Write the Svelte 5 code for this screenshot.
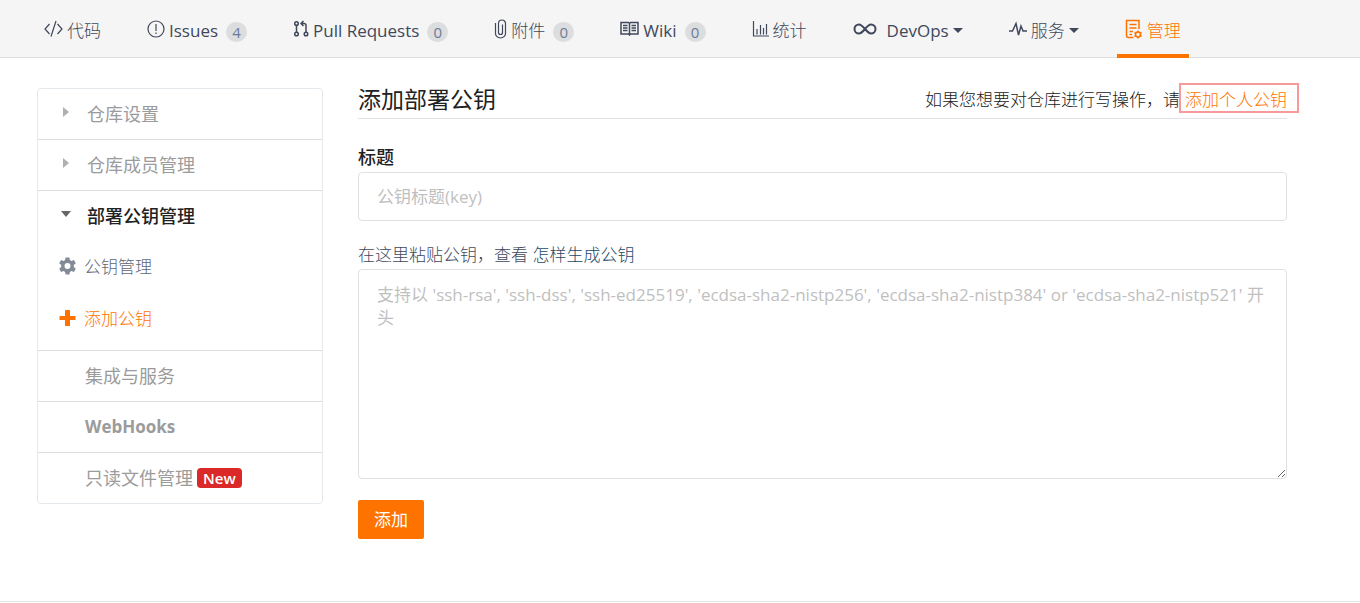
<script>
  const tabs = [
    { icon: 'code', label: '代码', light: true },
    { icon: 'issue', label: 'Issues', count: 4 },
    { icon: 'pull', label: 'Pull Requests', count: 0 },
    { icon: 'clip', label: '附件', count: 0, light: true },
    { icon: 'wiki', label: 'Wiki', count: 0 },
    { icon: 'chart', label: '统计', light: true },
    { icon: 'devops', label: 'DevOps', menu: true },
    { icon: 'pulse', label: '服务', menu: true, light: true },
    { icon: 'manage', label: '管理', active: true, light: true }
  ];
  let title = $state('');
  let key = $state('');
</script>

{#snippet tabIcon(name)}
  {#if name === 'code'}
    <svg width="19" height="18" viewBox="0 0 19 18"><path d="M5.5 4 1 9l4.500 5M13.500 4 18 9l-4.500 5M12 1 7 16.500" /></svg>
  {:else if name === 'issue'}
    <svg width="18" height="18" viewBox="0 0 18 18"><circle cx="9" cy="9" r="8" /><path d="M9 4v7M9 12.500v1.500" /></svg>
  {:else if name === 'pull'}
    <svg class="bold" width="16" height="18" viewBox="0 0 16 18"><circle cx="3.500" cy="3.500" r="1.800" /><circle cx="3.500" cy="14" r="1.800" /><circle cx="13" cy="14" r="1.800" /><path d="M3.500 5.300v6.900M13 12.200V5.500Q13 3.500 11 3.500H8.500M10.500 1 8 3.500 10.500 6" /></svg>
  {:else if name === 'clip'}
    <svg width="13" height="20" viewBox="0 0 13 20"><path d="M1.500 4v10.500a4.800 4.300 0 0 0 10 0V4.500a3.500 3.500 0 0 0-7 0v9a2 2 0 0 0 4 0V5.500" /></svg>
  {:else if name === 'wiki'}
    <svg class="bold" width="19" height="15" viewBox="0 0 19 15"><path d="M1 1.500h7.500l1 1 1-1H18V13h-7.500l-1 1-1-1H1zM9.500 2v12M3 4.500h4.500M3 7h4.500M3 9.500h4.500M11.500 4.500H16M11.500 7H16M11.500 9.500H16" /></svg>
  {:else if name === 'chart'}
    <svg width="17" height="18" viewBox="0 0 17 18"><path d="M1.500 1v15H17M5 14.500V9M8.500 14.500V5M11.500 14.500V8M14.500 14.500V4" /></svg>
  {:else if name === 'devops'}
    <svg class="heavy" width="24" height="14" viewBox="0 0 24 14"><path d="M12 7C9 3.500 8 2.500 6 2.500a4.500 4.500 0 0 0 0 9C8 11.500 9.500 10 12 7s4-4.500 6-4.500a4.500 4.500 0 0 1 0 9C16 11.500 15 10.500 12 7" /></svg>
  {:else if name === 'pulse'}
    <svg class="bold" width="18" height="16" viewBox="0 0 18 16"><path d="M0 10h3.500L7 2.500 9.500 14 12 5l2 5H18" /></svg>
  {:else}
    <svg class="bold" width="18" height="20" viewBox="0 0 18 20"><path d="M8.500 18.500H3.500Q1.500 18.500 1.500 16.500V1.500H14V10M4.500 5.500H11.500M4.500 9H11.500M4.500 12.500H8M4.500 15.500H7" /><circle cx="13" cy="15.500" r="2.500" /><path d="M13 11.500v1.500M13 18v1.500M9.500 13.500l1.300.800M15.200 16.700l1.300.800M9.500 17.500l1.300-.800M15.200 14.300l1.300-.800" /></svg>
  {/if}
{/snippet}

<nav class="tabs" aria-label="仓库">
  {#each tabs as tab}
    <a href="#{tab.icon}" class="tab" class:active={tab.active} class:light={tab.light}>
      {@render tabIcon(tab.icon)}
      <span>{tab.label}</span>
      {#if tab.count !== undefined}<span class="count">{tab.count}</span>{/if}
      {#if tab.menu}<i class="caret"></i>{/if}
    </a>
  {/each}
</nav>

<div class="page">
  <aside>
    <a class="group" href="#settings"><i class="arrow"></i>仓库设置</a>
    <a class="group" href="#members"><i class="arrow"></i>仓库成员管理</a>
    <div class="section">
      <a class="group open" href="#keys"><i class="arrow"></i>部署公钥管理</a>
      <a class="sub" href="#key-list">
        <svg width="17" height="18" viewBox="0 0 17 18"><path fill-rule="evenodd" d="M6.600 0.500h3.800l.5 2.600 1.500.9 2.500-.9 1.900 3.200-2 1.800v1.800l2 1.800-1.900 3.200-2.500-.9-1.500.9-.5 2.600H6.600l-.5-2.600-1.500-.9-2.500.9L.2 11.700l2-1.800V8.100l-2-1.800 1.900-3.200 2.500.9 1.500-.9zM8.500 6a3 3 0 1 0 0 6 3 3 0 0 0 0-6" /></svg>
        公钥管理
      </a>
      <a class="sub current" href="#key-new">
        <svg width="17" height="18" viewBox="0 0 17 18"><path d="M6.500 1h4q.5 0 .5.500V7h5q.5 0 .5.500v3q0 .5-.5.500h-5v5.500q0 .5-.5.500h-4q-.5 0-.5-.5V11H1q-.5 0-.5-.5v-3Q.5 7 1 7h5V1.500q0-.5.500-.5" /></svg>
        添加公钥
      </a>
    </div>
    <a class="plain" href="#services">集成与服务</a>
    <a class="plain" href="#webhooks"><b>WebHooks</b></a>
    <a class="plain" href="#readonly">只读文件管理<span class="new">New</span></a>
  </aside>

  <main>
    <header>
      <h1>添加部署公钥</h1>
      <p>如果您想要对仓库进行写操作，请<a href="#personal">添加个人公钥</a></p>
    </header>
    <form onsubmit={(e) => e.preventDefault()}>
      <label class="strong" for="title">标题</label>
      <input id="title" type="text" placeholder="公钥标题(key)" bind:value={title} />
      <div class="hint">
        <label for="key">在这里粘贴公钥，查看</label>
        <a href="#help">怎样生成公钥</a>
      </div>
      <textarea id="key" placeholder="支持以 'ssh-rsa', 'ssh-dss', 'ssh-ed25519', 'ecdsa-sha2-nistp256', 'ecdsa-sha2-nistp384' or 'ecdsa-sha2-nistp521' 开头" bind:value={key}></textarea>
      <button type="submit">添加</button>
    </form>
  </main>
</div>

<style>
  :global(body) {
    background: #fff;
    color: #40485b;
    font: 300 17px/24px "Open Sans", "Noto Sans CJK SC", sans-serif;
  }
  a {
    color: inherit;
    text-decoration: none;
  }
  .tabs {
    display: flex;
    gap: 30px;
    height: 57px;
    padding-left: 36px;
    background: #f5f5f5;
    border-bottom: 1px solid #dcddde;
  }
  .tab {
    display: flex;
    align-items: center;
    gap: 4px;
    padding: 4px 8px 0;
    white-space: nowrap;
    font-weight: 400;
  }
  .tab.light {
    font-weight: 300;
  }
  .tab svg {
    fill: none;
    stroke: currentColor;
    stroke-width: 1.2;
    flex: none;
    margin-bottom: 4px;
  }
  .tab svg.bold {
    stroke-width: 1.5;
  }
  .tab svg.heavy {
    stroke-width: 2;
    margin-right: 6px;
  }
  .tab.active {
    color: #fe7300;
    border-bottom: 4px solid #fe7300;
    padding-top: 8px;
    margin-bottom: -1px;
    height: 46px;
  }
  .count {
    min-width: 21px;
    margin: 2px 0 0 4px;
    border-radius: 10px;
    background: #dcddde;
    color: #6e7b9b;
    font-size: 15px;
    font-weight: 400;
    line-height: 20px;
    text-align: center;
  }
  .caret {
    border: 5px solid transparent;
    border-top-color: currentColor;
    border-bottom: 0;
  }
  .page {
    display: flex;
    align-items: flex-start;
    gap: 35px;
    padding: 30px 73px 62px 37px;
    border-bottom: 1px solid #e6e6e6;
  }
  aside {
    box-sizing: border-box;
    flex: 0 0 286px;
    border: 1px solid #e3e9ed;
    border-radius: 4px;
    color: #9b9b9b;
    font-size: 18px;
    font-weight: 400;
  }
  .group,
  .plain {
    display: flex;
    align-items: center;
    height: 50px;
    padding-left: 22px;
  }
  .plain {
    padding-left: 47px;
  }
  .plain b {
    font-size: 17px;
  }
  aside > * + * {
    border-top: 1px solid #dcddde;
  }
  .arrow {
    width: 27px;
  }
  .arrow::before {
    content: "";
    display: block;
    width: 0;
    margin: -4px 0 0 3px;
    border: 5px solid transparent;
    border-left: 6px solid #b0b0b0;
    border-right: 0;
  }
  .open {
    color: #212121;
    font-weight: 500;
  }
  .open .arrow::before {
    margin-left: 1px;
    border: 5px solid transparent;
    border-top: 6px solid #666;
    border-bottom: 0;
  }
  .section {
    padding-bottom: 5px;
  }
  .sub {
    display: flex;
    align-items: center;
    gap: 8px;
    height: 52px;
    padding-left: 21px;
    color: #5f6675;
    font-size: 17px;
    font-weight: 300;
  }
  .sub svg {
    fill: #838b97;
    margin-bottom: 2px;
  }
  .sub.current {
    color: #fe7300;
  }
  .current svg {
    fill: #fe7300;
  }
  .new {
    margin-left: 4px;
    padding: 0 6px;
    border-radius: 4px;
    background: #db2828;
    color: #fff;
    font-size: 15px;
    font-weight: 600;
    line-height: 20px;
  }
  main {
    flex: 1;
    min-width: 0;
  }
  header {
    display: flex;
    justify-content: space-between;
    align-items: center;
    height: 30px;
    border-bottom: 1px solid #e3e3e5;
    color: #212121;
  }
  h1 {
    margin: 0 0 8px;
    font-size: 23px;
    font-weight: 400;
    line-height: 30px;
  }
  header p {
    margin: 0 0 6px;
  }
  header p a {
    position: relative;
    margin-left: 5px;
    color: #fe7300;
  }
  header p a::after {
    content: "";
    position: absolute;
    inset: -5px -12px -2px -6px;
    border: 2px solid #f99a9a;
  }
  form {
    display: flex;
    flex-direction: column;
    align-items: flex-start;
    padding-top: 26px;
  }
  .strong {
    color: #212121;
    font-size: 18px;
    font-weight: 500;
    margin-bottom: 3px;
  }
  input,
  textarea {
    box-sizing: border-box;
    width: 100%;
    border: 1px solid #dfdfe6;
    border-radius: 4px;
    padding: 0 18px;
    font: inherit;
    font-weight: 400;
    color: #40485b;
    background: #fff;
  }
  input {
    height: 49px;
  }
  textarea {
    display: block;
    height: 210px;
    padding: 13px 18px;
    line-height: 23px;
    resize: vertical;
  }
  ::placeholder {
    color: #bfbfbf;
    opacity: 1;
  }
  .hint {
    margin: 22px 0 2px;
  }
  .hint a {
    color: #1d4a68;
  }
  button {
    margin-top: 21px;
    height: 39px;
    padding: 0 16px;
    border: 0;
    border-radius: 2px;
    background: #fe7300;
    color: #fff;
    font: inherit;
    font-weight: 400;
  }
</style>
